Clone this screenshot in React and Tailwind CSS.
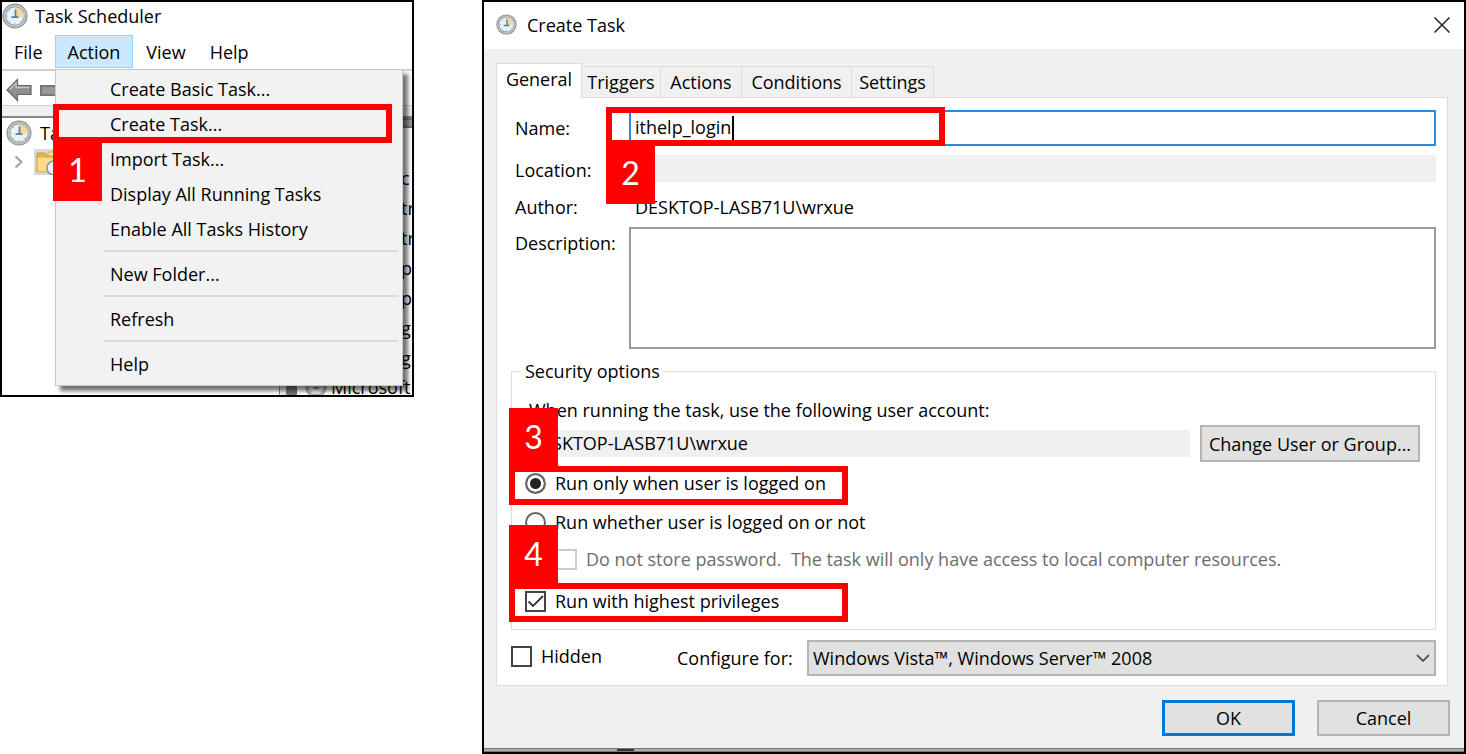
import { useState } from "react";

const MENU_BAR = ["File", "Action", "View", "Help"];

const ACTION_MENU = [
    ["Create Basic Task...", "Create Task...", "Import Task...", "Display All Running Tasks", "Enable All Tasks History"],
    ["New Folder..."],
    ["Refresh"],
    ["Help"],
];

const TABS = [
    { name: "General", width: "w-[86px]" },
    { name: "Triggers", width: "w-[79px]" },
    { name: "Actions", width: "w-[81px]" },
    { name: "Conditions", width: "w-[110px]" },
    { name: "Settings", width: "w-[82px]" },
];

// what is left of the task list next to the open menu
const LIST_ROWS = ["c", "tr", "tr", "p", "p", "gi", "gi"];

function ClockIcon({ className }) {
    return (
        <svg viewBox="0 0 26 26" className={className} aria-hidden="true">
            <circle cx="13" cy="13" r="12.500" fill="#85888a" />
            <circle cx="13" cy="13" r="11.500" fill="#bfc2c3" />
            <circle cx="13" cy="13" r="9.500" fill="#8d9499" />
            <circle cx="13" cy="13" r="8.800" fill="#e9f1f6" />
            <path d="M13 13V4.2A8.8 8.8 0 0 1 21.800 13V14H13Z" fill="#f5d99b" />
            <path d="M13.500 6.500V15M9.500 14.200H16.500" fill="none" stroke="#54809f" strokeWidth="1.700" />
            <path d="M13 20v1.5M4.5 13H6M7 7l1 1M7 19l1-1M19 19l-1-1" stroke="#a3b0b9" strokeWidth="1" />
        </svg>
    );
}

function BackArrow() {
    return (
        <svg viewBox="0 0 26 24" className="h-6 w-[26px]" aria-hidden="true">
            <path d="M1 12 11.500 1.500V7.500H25V16.500H11.500V22.500Z" fill="#8f8f8f" stroke="#666" strokeWidth="1.200" />
            <path d="M3.500 11.500 10 5V9.500H23.500" fill="none" stroke="#c4c4c4" strokeWidth="1.500" />
        </svg>
    );
}

function FolderIcon() {
    return (
        <svg viewBox="0 0 26 26" className="h-[26px] w-[26px]" aria-hidden="true">
            <path d="M3 4h8l2 3h11v15H3z" fill="#e5b94f" stroke="#c99a35" />
            <path d="M14 3h9v4h-9z" fill="#f7e3a4" stroke="#d1a748" />
            <path d="M3 8h21v15H3z" fill="#fbdc84" stroke="#d5a944" />
            <circle cx="20" cy="19" r="7" fill="#eef4f8" stroke="#8b8f92" strokeWidth="1.500" />
            <path d="M20 15v4h4" fill="none" stroke="#3f6f96" strokeWidth="1.500" />
        </svg>
    );
}

// numbered step: red frame plus the badge attached to its left corner
function Step({ number, above, className }) {
    return (
        <span className={`pointer-events-none absolute z-20 h-[39px] border-[6px] border-[#ff0000] ${className}`}>
            <span
                className={`absolute -left-1.5 flex h-16 w-[49px] items-center justify-center bg-[#ff0000] font-[Lato,sans-serif] text-[32px] leading-none text-white ${
                    above ? "bottom-full pb-1.5" : "top-full pt-0.5"
                }`}>
                {number}
            </span>
        </span>
    );
}

function CheckBox({ id, checked, onChange, disabled }) {
    return (
        <span className="relative flex">
            <input
                id={id}
                type="checkbox"
                checked={checked}
                onChange={onChange}
                disabled={disabled}
                className="h-[21px] w-[21px] appearance-none border-2 border-[#444] bg-white disabled:border-[#ccc]"
            />
            {checked && (
                <svg viewBox="0 0 21 21" className="pointer-events-none absolute inset-0" aria-hidden="true">
                    <path d="M3.500 10.500 8 15 18 5" fill="none" stroke="#333" strokeWidth="1.800" />
                </svg>
            )}
        </span>
    );
}

function Radio({ id, checked, onChange }) {
    return (
        <input
            id={id}
            type="radio"
            name="logon"
            checked={checked}
            onChange={onChange}
            className="h-[21px] w-[21px] appearance-none rounded-full border-2 border-[#666] bg-white shadow-[inset_0_0_0_3px_#fff] checked:bg-[#222]"
        />
    );
}

function ActionMenu() {
    return (
        <div role="menu" className="absolute top-[67px] left-[53px] z-10 w-[348px] border border-[#c8c8c8] bg-[#f2f2f2] pt-px pb-1 shadow-[5px_5px_4px_rgba(0,0,0,0.55)]">
            {ACTION_MENU.map((group, i) => (
                <div key={group[0]}>
                    {i > 0 && (
                        <div className="flex h-2.5 items-center pr-1 pl-12">
                            <hr className="flex-1 border-t-2 border-[#dadada]" />
                        </div>
                    )}
                    {group.map((item) => (
                        <div key={item} className="relative">
                            <button role="menuitem" className="block h-[35px] w-full pl-[54px] text-left whitespace-nowrap">
                                {item}
                            </button>
                            {item === "Create Task..." && <Step number="1" className="-top-0.5 right-2.5 -left-[3px]" />}
                        </div>
                    ))}
                </div>
            ))}
        </div>
    );
}

function SchedulerWindow() {
    return (
        <section className="relative w-[414px] shrink-0 overflow-hidden border-2 border-black bg-white">
            <header className="flex h-8 items-center gap-[7px] pb-1">
                <ClockIcon className="h-[26px] w-[26px]" />
                <h1>Task Scheduler</h1>
            </header>

            <nav className="flex h-[35px] items-center">
                {MENU_BAR.map((name) => (
                    <button key={name} className={name === "Action" ? "mr-px h-[33px] border border-[#99d1ff] bg-[#cce8ff] px-3" : "h-[33px] px-3"}>
                        {name}
                    </button>
                ))}
            </nav>

            <div className="flex h-9 items-center gap-2 border-t-2 border-[#d0d0d0] pt-1 pl-1">
                <BackArrow />
                <span className="h-[11px] w-8 border-2 border-[#777] bg-[#999]" />
            </div>
            <div className="h-[13px] border-t border-b-2 border-t-[#d0d0d0] border-b-[#888] bg-[#f0f0f0]" />

            <div className="flex h-[277px] overflow-hidden">
                <div className="w-[277px] shrink-0">
                    <div className="flex h-[30px] items-center gap-2 pl-1">
                        <ClockIcon className="h-[26px] w-[26px]" />
                        <span>Ta</span>
                    </div>
                    <div className="flex h-7 items-center gap-2.5 pl-3">
                        <svg viewBox="0 0 10 16" className="h-4 w-2.5" aria-hidden="true">
                            <path d="M1.500 2.500 7.500 8 1.500 13.500" fill="none" stroke="#a0a0a0" strokeWidth="2" />
                        </svg>
                        <span className="bg-[#d9d9d9] pr-2">
                            <FolderIcon />
                        </span>
                    </div>
                </div>
                <div className="w-2 shrink-0 border-x border-[#888] bg-[#f0f0f0]" />
                <div className="w-2.5 shrink-0 bg-[#777]" />
                <div className="flex flex-1 flex-col">
                    <div className="h-2.5 shrink-0 border-y-2 border-[#777] bg-[#999]" />
                    <ul className="pt-[35px]">
                        {LIST_ROWS.map((text, i) => (
                            <li key={i} className="flex h-[30px] items-center pl-[104px]">
                                {text}
                            </li>
                        ))}
                        <li className="flex h-7 items-center gap-1 pl-2">
                            <ClockIcon className="h-[22px] w-[22px] grayscale" />
                            Microsoft
                        </li>
                    </ul>
                </div>
            </div>

            <ActionMenu />
        </section>
    );
}

function GeneralTab() {
    const [name, setName] = useState("ithelp_login");
    const [logon, setLogon] = useState("interactive");
    const [highest, setHighest] = useState(true);
    const [hidden, setHidden] = useState(false);

    return (
        <div className="border border-[#dcdcdc] bg-white pt-3 pr-[11px] pb-[9px] pl-3.5">
            <div className="flex items-center pl-1">
                <label htmlFor="name" className="w-[114px]">
                    Name:
                </label>
                <div className="relative flex-1">
                    <input
                        id="name"
                        value={name}
                        onChange={(e) => setName(e.target.value)}
                        className="block h-9 w-full border-2 border-[#2a8ae0] px-1 pb-0.5 outline-none"
                    />
                    <span className="absolute top-1.5 left-[103px] h-6 w-0.5 bg-black" />
                    <Step number="2" className="-top-[3px] -left-[23px] w-[339px]" />
                </div>
            </div>
            <div className="mt-[9px] flex h-[30px] pl-1">
                <span className="w-[114px] leading-[30px]">Location:</span>
                <span className="h-[27px] flex-1 bg-[#f0f0f0]" />
            </div>
            <div className="mt-1.5 flex h-8 items-center pl-1">
                <span className="w-[114px]">Author:</span>
                <span className="pl-1.5">DESKTOP-LASB71U\wrxue</span>
            </div>
            <div className="mt-1 flex pl-1">
                <label htmlFor="description" className="w-[114px] pt-1">
                    Description:
                </label>
                <textarea id="description" className="block h-[122px] flex-1 resize-none border-2 border-[#999] px-1 outline-none" />
            </div>

            <fieldset className="mt-2.5 border border-[#dcdcdc] pr-[15px] pb-4 pl-[13px]">
                <legend className="-ml-1 px-1 whitespace-nowrap">Security options</legend>
                <p className="mt-[15px] pl-1">When running the task, use the following user account:</p>
                <div className="mt-[3px] flex items-center gap-2.5 pl-1">
                    <span className="h-[27px] flex-1 bg-[#f0f0f0] leading-[27px]">DESKTOP-LASB71U\wrxue</span>
                    <button className="h-[37px] w-[220px] border-2 border-[#b4b4b4] bg-[#e1e1e1] whitespace-nowrap">Change User or Group...</button>
                </div>
                <div className="relative mt-[9px] flex items-center gap-[9px]">
                    <Radio id="interactive" checked={logon === "interactive"} onChange={() => setLogon("interactive")} />
                    <label htmlFor="interactive">Run only when user is logged on</label>
                    <Step number="3" above className="-top-[5px] -left-4 w-[339px]" />
                </div>
                <div className="mt-[15px] flex items-center gap-[9px]">
                    <Radio id="always" checked={logon === "always"} onChange={() => setLogon("always")} />
                    <label htmlFor="always">Run whether user is logged on or not</label>
                </div>
                <div className="mt-[13px] flex items-center gap-[9px] pl-[31px]">
                    <CheckBox id="nostore" checked={false} disabled />
                    <label htmlFor="nostore" className="whitespace-pre text-[#6d6d6d]">
                        {"Do not store password.  The task will only have access to local computer resources."}
                    </label>
                </div>
                <div className="relative mt-[18px] flex items-center gap-[9px]">
                    <CheckBox id="highest" checked={highest} onChange={() => setHighest(!highest)} />
                    <label htmlFor="highest">Run with highest privileges</label>
                    <Step number="4" above className="-top-1.5 -left-4 w-[339px]" />
                </div>
            </fieldset>

            <div className="mt-2.5 flex items-center">
                <div className="flex w-[166px] items-center gap-[9px] pb-1">
                    <CheckBox id="hidden" checked={hidden} onChange={() => setHidden(!hidden)} />
                    <label htmlFor="hidden">Hidden</label>
                </div>
                <label htmlFor="configure" className="w-[130px] whitespace-nowrap">
                    Configure for:
                </label>
                <div className="relative flex-1">
                    <select id="configure" className="block h-9 w-full appearance-none border-2 border-[#b4b4b4] bg-[#e1e1e1] px-1">
                        <option>Windows Vista™, Windows Server™ 2008</option>
                    </select>
                    <svg viewBox="0 0 14 8" className="pointer-events-none absolute top-3.5 right-1.5 h-2 w-3.5" aria-hidden="true">
                        <path d="M1 1 7 7 13 1" fill="none" stroke="#555" strokeWidth="1.800" />
                    </svg>
                </div>
            </div>
        </div>
    );
}

function CreateTaskDialog() {
    return (
        <section className="min-w-0 flex-1 border-2 border-black bg-[#f0f0f0]">
            <header className="flex h-[47px] items-center gap-2.5 bg-white pr-3.5 pb-0.5 pl-3">
                <ClockIcon className="h-[21px] w-[21px]" />
                <h2 className="flex-1">Create Task</h2>
                <button aria-label="Close">
                    <svg viewBox="0 0 16 16" className="h-4 w-4" aria-hidden="true">
                        <path d="M0.500 0.500 15.500 15.500M15.500 0.500 0.500 15.500" stroke="#222" strokeWidth="1.500" />
                    </svg>
                </button>
            </header>

            <div className="pt-3.5 pr-4 pl-3">
                <div role="tablist" className="flex items-end">
                    {TABS.map(({ name, width }) => (
                        <button
                            key={name}
                            role="tab"
                            aria-selected={name === "General"}
                            className={`border border-b-0 border-[#dcdcdc] ${width} ${
                                name === "General" ? "relative -mb-px h-[35px] bg-white pb-1" : "h-[31px] border-l-0"
                            }`}>
                            {name}
                        </button>
                    ))}
                </div>
                <GeneralTab />
            </div>

            <footer className="flex justify-end gap-[22px] pt-3.5 pr-3.5 pb-3">
                <button className="h-9 w-[133px] border-[3px] border-[#0078d7] bg-[#e1e1e1]">OK</button>
                <button className="h-9 w-[133px] border-2 border-[#b4b4b4] bg-[#e1e1e1]">Cancel</button>
            </footer>
            <div className="h-1 border-y border-[#777] bg-[#aaa] pl-[133px]">
                <div className="h-0.5 w-[17px] bg-[#333]" />
            </div>
        </section>
    );
}

export default function App() {
    return (
        <main className="flex items-start justify-between gap-[68px] bg-white font-['Open_Sans','Noto_Sans',sans-serif] text-[18px] leading-6 text-black">
            <SchedulerWindow />
            <CreateTaskDialog />
        </main>
    );
}
